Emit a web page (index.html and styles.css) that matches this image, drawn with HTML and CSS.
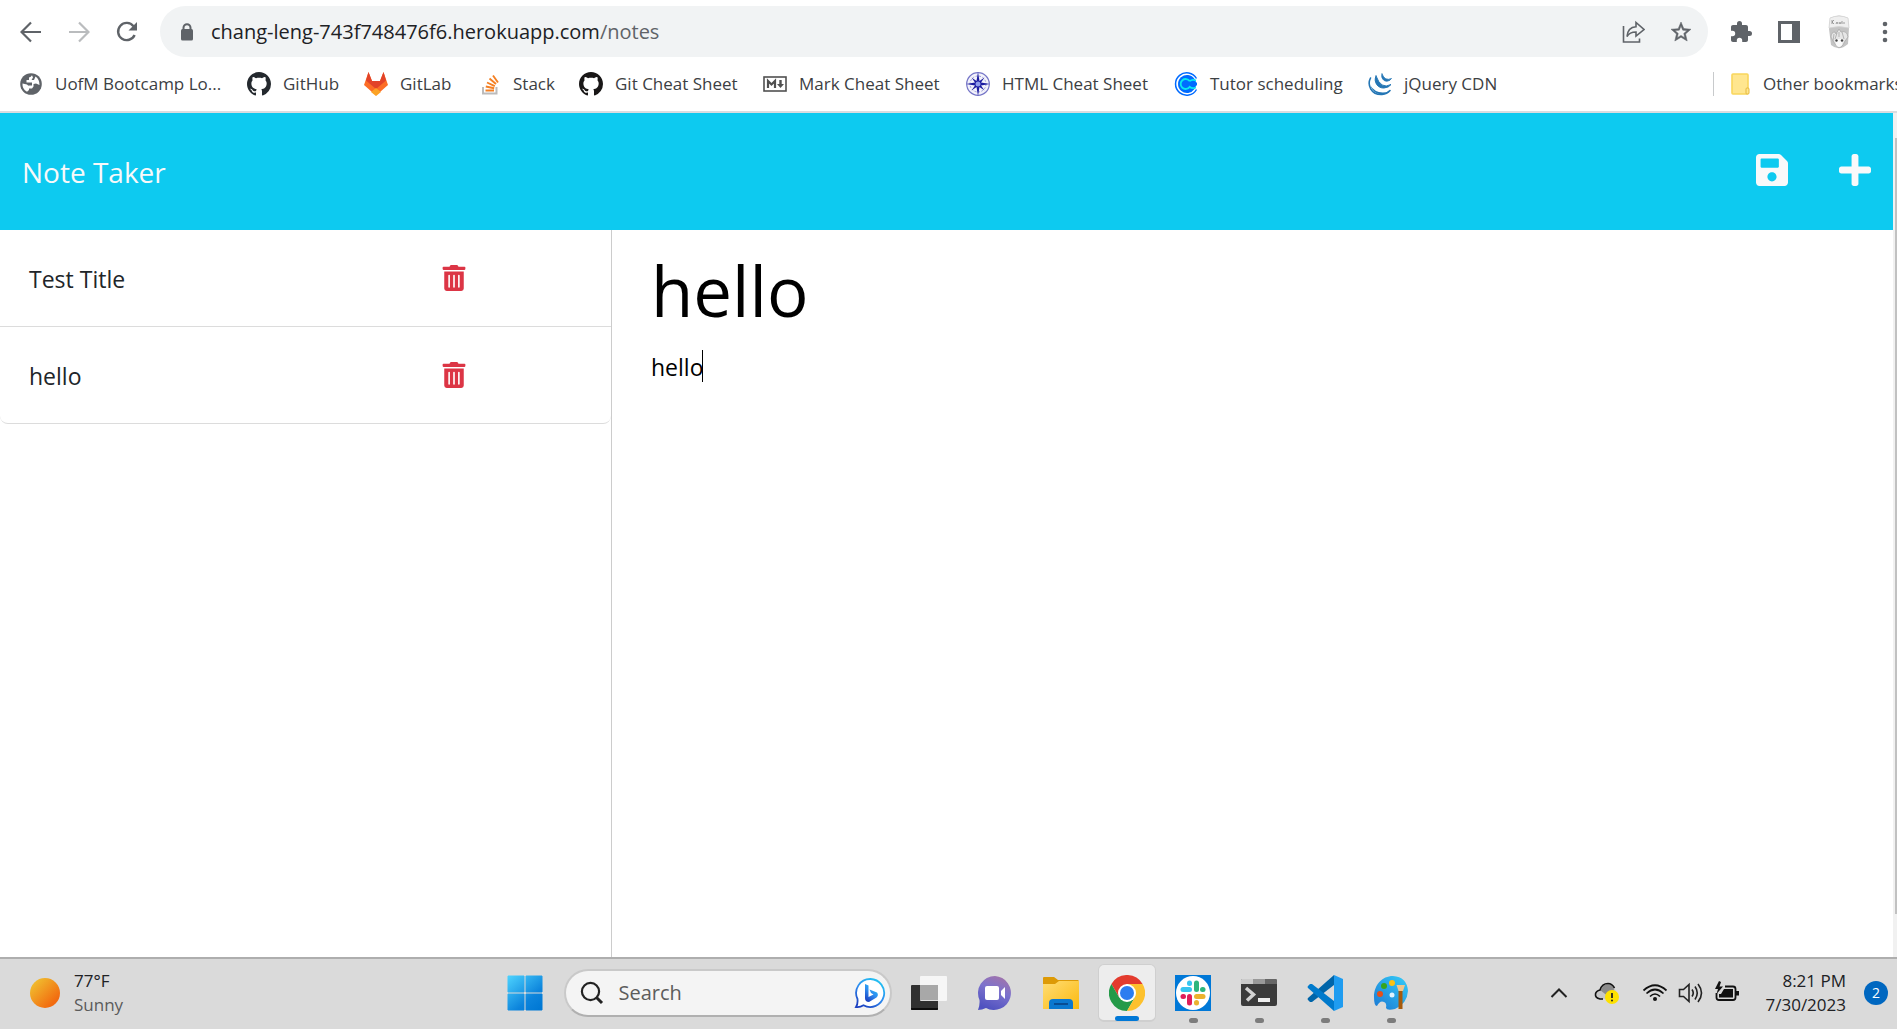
FILE: index.html
```html
<!DOCTYPE html>
<html lang="en">
<head>
<meta charset="utf-8">
<title>Note Taker</title>
<link rel="stylesheet" href="styles.css">
</head>
<body>
<div class="screen">
  <header class="browser">
    <div class="toolbar">
      <button class="tool" aria-label="Back"><svg width="22" height="22" viewBox="0 0 22 22"><path d="M21 11H2M11 1.500L1.500 11L11 20.500" fill="none" stroke="#5f6368" stroke-width="2.200"/></svg></button>
      <button class="tool" aria-label="Forward" disabled><svg width="22" height="22" viewBox="0 0 22 22"><path d="M1 11H20M11 1.500L20.500 11L11 20.500" fill="none" stroke="#babcbe" stroke-width="2.200"/></svg></button>
      <button class="tool" aria-label="Reload"><svg width="22" height="22" viewBox="0 0 22 22"><path d="M18.600 14A8.600 8.600 0 1 1 17.500 5.200" fill="none" stroke="#5f6368" stroke-width="2.400"/><path d="M21 1V9.500H12.500Z" fill="#5f6368"/></svg></button>
      <div class="address">
        <svg width="14" height="18" viewBox="0 0 14 18"><path d="M3.500 8V4.800a3.500 3.500 0 0 1 7 0V8" fill="none" stroke="#5f6368" stroke-width="2"/><rect x="1" y="6" width="12" height="11.500" rx="1.500" fill="#5f6368"/></svg>
        <div class="url" role="textbox" aria-label="Address" contenteditable="true" spellcheck="false">chang-leng-743f748476f6.herokuapp.com<span class="path">/notes</span></div>
        <button class="tool" aria-label="Share"><svg width="24" height="24" viewBox="0 0 24 24" fill="none" stroke="#5f6368" stroke-width="1.600"><path d="M2.500 6V22H18.500V18.500"/><path d="M6 16.500C6.500 10 10 7 15 6.700V2.500L23 9.500L15 16V12C11 12 8 13 6 16.500Z"/></svg></button>
        <button class="tool" aria-label="Bookmark"><svg width="24" height="24" viewBox="0 0 24 24"><path d="M22 9.240l-7.190-.620L12 2 9.190 8.630 2 9.240l5.460 4.730L5.820 21 12 17.270 18.180 21l-1.630-7.030L22 9.240zM12 15.400l-3.760 2.270 1-4.280-3.320-2.880 4.380-.380L12 6.100l1.710 4.040 4.380.380-3.320 2.880 1 4.280L12 15.400z" fill="#5f6368" stroke="#5f6368" stroke-width=".5"/></svg></button>
      </div>
      <button class="tool" aria-label="Extensions"><svg width="24" height="24" viewBox="0 0 24 24"><path d="M20.500 11H19V7c0-1.100-.9-2-2-2h-4V3.500a2.500 2.500 0 0 0-5 0V5H4c-1.100 0-2 .9-2 2v3.800h1.500a2.700 2.700 0 0 1 0 5.400H2V20c0 1.100.9 2 2 2h3.800v-1.500a2.700 2.700 0 0 1 5.400 0V22H17c1.100 0 2-.9 2-2v-4h1.500a2.500 2.500 0 0 0 0-5z" fill="#5f6368"/></svg></button>
      <button class="tool" aria-label="Side panel"><svg width="22" height="22" viewBox="0 0 22 22"><path d="M0 0H22V22H0ZM3 3V19H14V3Z" fill="#5f6368" fill-rule="evenodd"/></svg></button>
      <button class="tool tool-profile" aria-label="Profile"><svg width="24" height="34" viewBox="0 0 24 34">
        <path d="M3 3Q12-2 21 3L22 13L21 29Q12 37 4 30L2 14Z" fill="#c4c4c4"/>
        <path d="M3 3Q12-1 21 3L22 13Q12 10 2 13Z" fill="#efefef" stroke="#d4d4d4" stroke-width=".8"/>
        <path d="M5 5v4m0-2 2-2m-2 2 2 2m2 0 1-2 1 2m1-2 1 2 1-2m1 2v-3m2 3v-2" fill="none" stroke="#888" stroke-width=".8"/>
        <path d="M4 22Q4 17 8 17L9 19L12 14L14 17Q20 15 21 22L18 26L16 30Q12 35 9 30L6 26Z" fill="#e6e6e6" stroke="#aaa" stroke-width=".8"/>
        <path d="M7 19l-1 7m4-8-2 6m4-7v5m3-5 2 7" fill="none" stroke="#b4b4b4"/>
        <path d="M8 24H16L15 30Q12 34 9 30Z" fill="#fafafa"/>
        <circle cx="9.500" cy="25.500" r="1.200" fill="#444"/><circle cx="15" cy="25.500" r="1.200" fill="#444"/></svg></button>
      <button class="tool tool-menu" aria-label="Menu"><svg width="6" height="22" viewBox="0 0 6 22" fill="#5f6368"><circle cx="3" cy="3" r="2.300"/><circle cx="3" cy="11" r="2.300"/><circle cx="3" cy="19" r="2.300"/></svg></button>
    </div>
    <nav class="bookmarks" aria-label="Bookmarks">
      <a class="bookmark" href="#"><svg width="24" height="24" viewBox="0 0 24 24"><circle cx="12" cy="12" r="10.800" fill="#5f6368"/><path d="M13 3.300Q12 5 10 5.500V8H7.500V10.500H13V13.500H10.500Q9 14 8 12.500L3.500 11.500Q3 17 8 19.800L10 18V16.500H13L14.500 14.500V12L17 11.500L20.500 13Q20.500 7 16.500 4.500L15 8H12.500L14 5.500Z" fill="#fff"/></svg><span>UofM Bootcamp Lo...</span></a>
      <a class="bookmark" href="#"><svg width="24" height="24" viewBox="0 0 16 16"><path fill="#24292e" d="M8 0C3.580 0 0 3.580 0 8c0 3.540 2.290 6.530 5.470 7.590.4.070.55-.17.55-.38 0-.19-.01-.82-.01-1.490-2.010.37-2.530-.49-2.690-.94-.09-.23-.48-.94-.82-1.130-.28-.15-.68-.52-.01-.53.63-.01 1.080.58 1.230.82.72 1.210 1.870.87 2.330.66.07-.52.28-.87.51-1.070-1.780-.2-3.640-.89-3.640-3.950 0-.87.31-1.590.82-2.150-.08-.2-.36-1.020.08-2.120 0 0 .67-.21 2.200.82.64-.18 1.320-.27 2-.27s1.360.09 2 .27c1.530-1.040 2.200-.82 2.200-.82.44 1.100.16 1.920.08 2.120.51.56.82 1.270.82 2.150 0 3.070-1.870 3.750-3.650 3.950.29.25.54.73.54 1.480 0 1.070-.01 1.930-.01 2.200 0 .21.15.46.55.38A8.010 8.010 0 0 0 16 8c0-4.420-3.580-8-8-8z"/></svg><span>GitHub</span></a>
      <a class="bookmark" href="#"><svg width="24" height="24" viewBox="0 0 24 24"><path d="M4.500 0L8 9H16L19.500 0L24 13L12 23.500L0 13Z" fill="#fc6d26"/><path d="M4.500 0L8 9H16L19.500 0L22 8.500L12 17L2 8.500Z" fill="#e24329"/><path d="M12 16L17 20L12 24L7 20Z" fill="#fca326"/></svg><span>GitLab</span></a>
      <a class="bookmark" href="#"><svg width="20" height="24" viewBox="0 0 20 24" fill="none"><path d="M2 15V21.500H15.500V15" stroke="#bcbbbb" stroke-width="2"/><path d="M4.500 18.500H13M4.800 14.500L13.200 16.300M6 10.500L13.800 14.200M8.500 6.500L15 12M12 3.500L17 10.500" stroke="#f48024" stroke-width="1.900"/></svg><span>Stack</span></a>
      <a class="bookmark" href="#"><svg width="24" height="24" viewBox="0 0 16 16"><path fill="#191717" d="M8 0C3.580 0 0 3.580 0 8c0 3.540 2.290 6.530 5.470 7.590.4.070.55-.17.55-.38 0-.19-.01-.82-.01-1.490-2.010.37-2.530-.49-2.690-.94-.09-.23-.48-.94-.82-1.130-.28-.15-.68-.52-.01-.53.63-.01 1.080.58 1.230.82.72 1.210 1.870.87 2.330.66.07-.52.28-.87.51-1.070-1.780-.2-3.640-.89-3.640-3.950 0-.87.31-1.590.82-2.150-.08-.2-.36-1.020.08-2.120 0 0 .67-.21 2.200.82.64-.18 1.320-.27 2-.27s1.360.09 2 .27c1.530-1.040 2.200-.82 2.200-.82.44 1.100.16 1.920.08 2.120.51.56.82 1.270.82 2.150 0 3.070-1.870 3.750-3.650 3.950.29.25.54.73.54 1.480 0 1.070-.01 1.930-.01 2.200 0 .21.15.46.55.38A8.010 8.010 0 0 0 16 8c0-4.420-3.580-8-8-8z"/></svg><span>Git Cheat Sheet</span></a>
      <a class="bookmark" href="#"><svg width="24" height="24" viewBox="0 0 24 24" fill="none" stroke="#505050"><rect x="1" y="5" width="22" height="14" stroke-width="1.600"/><path d="M5 16V9L8.500 12.500L12 9V16" stroke-width="2.200"/><path d="M17.500 8V13" stroke-width="2.400"/><path d="M14 12H21L17.500 16Z" fill="#505050" stroke="none"/></svg><span>Mark Cheat Sheet</span></a>
      <a class="bookmark" href="#"><svg width="24" height="24" viewBox="0 0 24 24"><circle cx="12" cy="12" r="11.300" fill="#f3f3fb" stroke="#7777c8" stroke-width="1.200"/><circle cx="12" cy="12" r="8" fill="none" stroke="#9a9ad6" stroke-dasharray="2 1.500"/><path d="M12 0L13.500 9L18.500 5.500L15 10.500L24 12L15 13.500L18.500 18.500L13.500 15L12 24L10.500 15L5.500 18.500L9 13.500L0 12L9 10.500L5.500 5.500L10.500 9Z" fill="#1c1ca0"/><circle cx="12" cy="12" r="2.500" fill="#8f9bea"/></svg><span>HTML Cheat Sheet</span></a>
      <a class="bookmark" href="#"><svg width="24" height="24" viewBox="0 0 24 24" fill="none"><path d="M22.500 6.500A11.200 11.200 0 1 0 22.500 17.500" stroke="#006bff" stroke-width="1.500"/><path d="M20.500 7A9 9 0 1 0 20.500 17L22 14V10Z" fill="#006bff"/><path d="M15.800 9.200A5 5 0 1 0 15.800 14.800Q18 17 22 15.500" stroke="#0ae8f0" stroke-width="1.800"/><path d="M15.800 9.200Q18 7 22 8.500" stroke="#0ae8f0" stroke-width="1.800"/><path d="M18 12H23" stroke="#006bff" stroke-width="3"/></svg><span>Tutor scheduling</span></a>
      <a class="bookmark" href="#"><svg width="24" height="24" viewBox="0 0 24 24" fill="none" stroke="#2476b5" stroke-linecap="round"><path d="M2.500 6C-1 13 3 23 14 22.500Q19 22 22 18.500" stroke-width="1.600"/><path d="M2 13Q5 22 14 22.500Q18 22 21 19.500Q8 23 2 13Z" fill="#2476b5" stroke="none"/><path d="M8 4C5 10 10 16.500 16 16Q21 15.500 23 12.500Q13 18 8 4Z" fill="#2476b5" stroke-width="1"/><path d="M14 2C12.500 6 16 9.500 19 9.200Q22 9 23.500 6.500Q17 9.500 14 2Z" fill="#2476b5" stroke-width=".8"/></svg><span>jQuery CDN</span></a>
      <a class="bookmark bookmark-folder" href="#"><svg width="20" height="24" viewBox="0 0 20 24"><rect x="2" y="2" width="16" height="20" rx="1" fill="#ffe68f" stroke="#f9d65c" stroke-width="1.600"/><rect x="16" y="16" width="3" height="6" rx="1" fill="#ffe68f" stroke="#e6b93c"/></svg><span>Other bookmarks</span></a>
    </nav>
  </header>

  <div class="viewport">
    <div class="page">
      <header class="app-bar">
        <a class="brand" href="#">Note Taker</a>
        <div class="app-actions">
          <button class="plain" aria-label="Save note"><svg width="32" height="32" viewBox="0 32 448 448"><path fill="#f8f9fa" fill-rule="evenodd" d="M433.941 129.941l-83.882-83.882A48 48 0 0 0 316.118 32H48C21.490 32 0 53.490 0 80v352c0 26.510 21.490 48 48 48h352c26.510 0 48-21.490 48-48V163.882a48 48 0 0 0-14.059-33.941zM224 416c-35.346 0-64-28.654-64-64 0-35.346 28.654-64 64-64s64 28.654 64 64c0 35.346-28.654 64-64 64zm96-304.520V212c0 6.627-5.373 12-12 12H76c-6.627 0-12-5.373-12-12V108c0-6.627 5.373-12 12-12h228.520c3.183 0 6.235 1.264 8.485 3.515l3.480 3.480A11.996 11.996 0 0 1 320 111.480z"/></svg></button>
          <button class="plain" aria-label="New note"><svg width="32" height="32" viewBox="0 32 448 448"><path fill="#f8f9fa" d="M416 208H272V64c0-17.670-14.330-32-32-32h-32c-17.670 0-32 14.330-32 32v144H32c-17.670 0-32 14.330-32 32v32c0 17.670 14.330 32 32 32h144v144c0 17.670 14.330 32 32 32h32c17.670 0 32-14.330 32-32V304h144c17.670 0 32-14.330 32-32v-32c0-17.670-14.330-32-32-32z"/></svg></button>
        </div>
      </header>
      <main class="workspace">
        <aside class="sidebar">
          <ul class="notes">
            <li class="note"><span class="note-title">Test Title</span><button class="plain" aria-label="Delete Test Title"><svg width="24" height="26" viewBox="0 0 448 512"><path fill="#dc3545" fill-rule="evenodd" d="M32 464a48 48 0 0 0 48 48h288a48 48 0 0 0 48-48V128H32zm272-256a16 16 0 0 1 32 0v224a16 16 0 0 1-32 0zm-96 0a16 16 0 0 1 32 0v224a16 16 0 0 1-32 0zm-96 0a16 16 0 0 1 32 0v224a16 16 0 0 1-32 0zM432 32H312l-9.400-18.700A24 24 0 0 0 281.100 0H166.800a23.720 23.720 0 0 0-21.400 13.300L136 32H16A16 16 0 0 0 0 48v32a16 16 0 0 0 16 16h416a16 16 0 0 0 16-16V48a16 16 0 0 0-16-16z"/></svg></button></li>
            <li class="note"><span class="note-title">hello</span><button class="plain" aria-label="Delete hello"><svg width="24" height="26" viewBox="0 0 448 512"><path fill="#dc3545" fill-rule="evenodd" d="M32 464a48 48 0 0 0 48 48h288a48 48 0 0 0 48-48V128H32zm272-256a16 16 0 0 1 32 0v224a16 16 0 0 1-32 0zm-96 0a16 16 0 0 1 32 0v224a16 16 0 0 1-32 0zm-96 0a16 16 0 0 1 32 0v224a16 16 0 0 1-32 0zM432 32H312l-9.400-18.700A24 24 0 0 0 281.100 0H166.800a23.720 23.720 0 0 0-21.400 13.300L136 32H16A16 16 0 0 0 0 48v32a16 16 0 0 0 16 16h416a16 16 0 0 0 16-16V48a16 16 0 0 0-16-16z"/></svg></button></li>
          </ul>
        </aside>
        <section class="editor">
          <input class="editor-title" type="text" value="hello" aria-label="Note title">
          <div class="editor-body">
            <textarea class="editor-text" aria-label="Note text" spellcheck="false">hello</textarea>
            <span class="caret"></span>
          </div>
        </section>
      </main>
    </div>
    <div class="scrollbar"><div class="thumb"></div></div>
  </div>

  <footer class="taskbar">
    <div class="weather">
      <svg width="30" height="30" viewBox="0 0 30 30"><defs><linearGradient id="sun" x1=".1" y1=".1" x2=".8" y2=".8"><stop offset="0" stop-color="#f0c030"/><stop offset="1" stop-color="#f26b0f"/></linearGradient></defs><circle cx="15" cy="15" r="15" fill="url(#sun)"/></svg>
      <div class="weather-text"><span>77°F</span><span class="muted">Sunny</span></div>
    </div>
    <div class="apps">
      <button class="app" aria-label="Start"><svg width="36" height="36" viewBox="0 0 36 36"><defs><linearGradient id="win" gradientUnits="userSpaceOnUse" x1="0" y1="0" x2="30" y2="36"><stop offset="0" stop-color="#4fd5ff"/><stop offset=".7" stop-color="#0c84dc"/><stop offset="1" stop-color="#0078d4"/></linearGradient></defs><path d="M1 1H17V17H1ZM19 1H35V17H19ZM1 19H17V35H1ZM19 19H35V35H19Z" fill="url(#win)" stroke="url(#win)"/></svg></button>
      <label class="search">
        <svg width="24" height="24" viewBox="0 0 24 24" fill="none" stroke="#222"><circle cx="10.500" cy="10.500" r="8.600" stroke-width="2.200"/><path d="M16.500 16.500L22 22" stroke-width="3"/></svg>
        <input class="search-input" type="text" placeholder="Search" aria-label="Search">
        <svg width="32" height="32" viewBox="0 0 32 32"><defs><linearGradient id="bing" x1=".8" y1="0" x2=".2" y2="1"><stop offset="0" stop-color="#22c6f2"/><stop offset=".5" stop-color="#2f8df0"/><stop offset="1" stop-color="#1b3fc0"/></linearGradient></defs><path d="M16.500 2A14 14 0 1 1 9.500 28.300Q6 30.500 2 30Q4 27 3.500 22A14 14 0 0 1 16.500 2Z" fill="#fff" stroke="url(#bing)" stroke-width="1.800"/><path d="M11 7L14.500 8.500V20L19.500 17.500L17 16L15.500 12.500L23 15.500Q25 18 22.500 20.500L15 25Q11 25 11 21Z" fill="url(#bing)"/></svg>
      </label>
      <button class="app" aria-label="Task view"><svg width="36" height="36" viewBox="0 0 36 36"><rect x="0" y="10" width="27" height="25" rx="1" fill="#303030"/><path d="M0 33H27V34Q27 35 26 35H1Q0 35 0 34Z" fill="#0c0c0c"/><rect x="9" y="1" width="27" height="25" rx="1" fill="#fafafa" opacity=".85"/><rect x="9" y="10" width="18" height="15" fill="#a8a8a8"/></svg></button>
      <button class="app" aria-label="Chat"><svg width="36" height="36" viewBox="0 0 36 36"><defs><linearGradient id="chat" x1=".8" y1="0" x2=".4" y2="1"><stop offset="0" stop-color="#a473a8"/><stop offset=".45" stop-color="#7c72cd"/><stop offset="1" stop-color="#5052c0"/></linearGradient></defs><path d="M18 1A17 17 0 1 1 9 33Q5 35 1 35Q3 30 2.500 25A17 17 0 0 1 18 1Z" fill="url(#chat)"/><rect x="8" y="11" width="14" height="14" rx="2" fill="#fff"/><path d="M24 16L28 12V24L24 20Z" fill="#fff"/></svg></button>
      <button class="app" aria-label="File Explorer"><svg width="36" height="36" viewBox="0 0 36 36"><defs><linearGradient id="folder" x1="0" y1="0" x2="1" y2="1"><stop offset="0" stop-color="#ffdd75"/><stop offset="1" stop-color="#fbb90f"/></linearGradient></defs><path d="M0 3Q0 2 1 2H11L15 5H35L36 6V10H0Z" fill="#dd9a06"/><path d="M0 9H12L16 6H36V34H0Z" fill="url(#folder)"/><path d="M6 34V28Q6 24 10 24H26Q30 24 30 28V34Z" fill="#0b78cf"/><path d="M11 29H25" stroke="#084d93" stroke-width="2"/></svg></button>
      <button class="app app-active" aria-label="Chrome"><svg width="36" height="36" viewBox="0 0 36 36"><path d="M2.400 9A18 18 0 0 1 33.600 9H18L10.200 22.500Z" fill="#e33b2e"/><path d="M2.400 9A18 18 0 0 0 18 36L25.800 22.500H10.200Z" fill="#249a48"/><path d="M33.600 9A18 18 0 0 1 18 36L25.800 22.500Q28 14 18 9Z" fill="#fdc12d"/><circle cx="18" cy="18" r="9" fill="#fff"/><circle cx="18" cy="18" r="7" fill="#2c7df0"/></svg><span class="running running-active"></span></button>
      <button class="app" aria-label="Slack"><svg width="36" height="36" viewBox="0 0 36 36"><path d="M0 0H36V36H0Z" fill="#0078d7"/><circle cx="18" cy="18" r="17" fill="#fff"/><g stroke-width="5" stroke-linecap="round"><path d="M8 14.500H14.500" stroke="#36c5f0"/><path d="M14.500 8V8.500" stroke="#36c5f0"/><path d="M21.500 8V14.500" stroke="#2eb67d"/><path d="M27.500 14.500H28" stroke="#2eb67d"/><path d="M21.500 21.500H28" stroke="#ecb22e"/><path d="M21.500 27.500V28" stroke="#ecb22e"/><path d="M14.500 21.500V28" stroke="#e01e5a"/><path d="M8 21.500H8.500" stroke="#e01e5a"/></g></svg><span class="running"></span></button>
      <button class="app" aria-label="Terminal"><svg width="36" height="36" viewBox="0 0 36 36"><rect x="0" y="4" width="36" height="27" rx="2" fill="#3b3b3b"/><path d="M1 4H12V9H0V5Z" fill="#ccc"/><path d="M12 4H24V9H12Z" fill="#999"/><path d="M24 4H35L36 5V9H24Z" fill="#666"/><path d="M5 13L12.500 19.500L6 25.500" fill="none" stroke="#d2d2d2" stroke-width="3.500"/><rect x="17" y="23" width="12" height="4" fill="#eee"/></svg><span class="running"></span></button>
      <button class="app" aria-label="Visual Studio Code"><svg width="36" height="36" viewBox="0 0 36 36"><path d="M27 0L1 23Q0 24 1 25L3 27H5L27 10Z" fill="#0065a9"/><path d="M27 36L1 13Q0 12 1 11L3 9H5L27 26Z" fill="#007acc"/><path d="M27 0L36 4V32L27 36Z" fill="#1f9cf0"/></svg><span class="running"></span></button>
      <button class="app" aria-label="Paint"><svg width="36" height="36" viewBox="0 0 36 36"><defs><linearGradient id="paint" x1="1" y1="0" x2=".1" y2="1"><stop offset="0" stop-color="#35cdf8"/><stop offset="1" stop-color="#1c7cd5"/></linearGradient></defs><path d="M20 1C9 1 1 10 1 22Q1 31 4 31Q7 25 11 27Q14 28 13 33Q14 36 22 34Q34 29 35 16Q34 2 20 1Z" fill="url(#paint)"/><circle cx="19" cy="20" r="2.500" fill="#dff3ff"/><circle cx="7" cy="19" r="3" fill="#e5501a"/><circle cx="11" cy="11" r="3" fill="#37a51c"/><circle cx="19" cy="8" r="3" fill="#fbc212"/><path d="M25.500 16H29.500V34H25.500Z" fill="#a65a0c"/><path d="M23.500 10H32L30 16H25.500Z" fill="#f0c68d"/></svg><span class="running"></span></button>
    </div>
    <div class="tray">
      <button class="tray-item" aria-label="Hidden icons"><svg width="18" height="24" viewBox="0 0 18 24"><path d="M1.500 16L9 8.500L16.500 16" fill="none" stroke="#222" stroke-width="2"/></svg></button>
      <button class="tray-item tray-cloud" aria-label="OneDrive"><svg width="26" height="24" viewBox="0 0 26 24"><path d="M6 18Q2 18 2 14Q2 10 6 9Q8 3 14 3Q19 3 21 8L23 14L13 18Z" fill="#c8c8c8"/><path d="M6 9Q14 6 21 11V16H15Z" fill="#8b8b8b"/><path d="M7 9Q9 3 14 3Q19 3 20 9L15 13Z" fill="#8b8b8b"/><path d="M9 18H6Q1 17 1.500 13Q2 10 6 9Q8 2.500 14 2.500Q18 2.500 20.500 7" fill="none" stroke="#111" stroke-width="1.600"/><circle cx="18" cy="16" r="7" fill="#fde100"/><path d="M18 12V17" stroke="#222" stroke-width="1.800"/><circle cx="18" cy="19.500" r="1" fill="#222"/></svg></button>
      <button class="tray-item" aria-label="Network"><svg width="26" height="24" viewBox="0 0 26 24" fill="none" stroke="#111" stroke-width="1.700"><path d="M1.500 9.500Q13-1 24.500 9.500M4.500 12.500Q13 4.500 21.500 12.500M8 15.500Q13 10.500 18 15.500"/><circle cx="13" cy="18" r="2" fill="#111" stroke="none"/></svg></button>
      <button class="tray-item" aria-label="Volume"><svg width="26" height="24" viewBox="0 0 26 24" fill="none" stroke="#222" stroke-width="1.600"><path d="M1.500 8.500H5.500L11 3.500V20.500L5.500 15.500H1.500Z"/><path d="M14 8.500Q16.500 12 14 15.500M17 5.500Q21.500 12 17 18.500M20 3Q27 12 20 21"/></svg></button>
      <button class="tray-item" aria-label="Battery"><svg width="26" height="24" viewBox="0 0 26 24"><path d="M11 5.500H19Q21.500 5.500 21.500 8V16.500Q21.500 19 19 19H5Q2.500 19 2.500 16.500V12" fill="none" stroke="#111" stroke-width="1.800"/><path d="M10 8H19V16.500H5V13H7ZM22 10H25V14.500H22Z" fill="#111"/><path d="M5 0L1 8H4L2.500 13L9 5.500H5.500L7 1Z" fill="#111"/></svg></button>
      <div class="clock"><span>8:21 PM</span><span>7/30/2023</span></div>
      <span class="badge">2</span>
    </div>
  </footer>
</div>
</body>
</html>
```
FILE: styles.css
```css
* { box-sizing: border-box; }

body {
  margin: 0;
  background: #fff;
  font-family: "Open Sans", "Noto Sans", sans-serif;
  color: #202124;
}

button, input, textarea {
  font: inherit;
  color: inherit;
  border: 0;
  background: none;
  padding: 0;
  outline: 0;
}

svg { display: block; flex: none; }
a { color: inherit; text-decoration: none; }

.screen {
  display: flex;
  flex-direction: column;
  min-height: 100vh;
  overflow: hidden;
}

/* Browser chrome */
.browser { border-bottom: 2px solid #dadce0; }

.toolbar {
  display: flex;
  align-items: center;
  padding: 6px 0 0 7px;
}

.tool {
  display: grid;
  place-items: center;
  flex: none;
  width: 48px;
  height: 48px;
}

.tool-profile { padding-left: 4px; }

.tool-menu {
  width: 36px;
  padding-left: 12px;
}

.address {
  display: flex;
  align-items: center;
  flex: 1;
  min-width: 0;
  height: 51px;
  margin: 0 9px;
  padding: 0 3px 0 20px;
  border-radius: 26px;
  background: #f1f3f4;
}

.url {
  flex: 1;
  min-width: 0;
  margin-left: 17px;
  font-size: 20px;
  line-height: 28px;
  white-space: nowrap;
}

.path { color: #5f6368; }

.bookmarks {
  display: grid;
  grid-template-columns: 227px 117px 117px 98px 184px 203px 208px 194px 1fr auto;
  align-items: center;
  height: 54px;
  padding-left: 20px;
  color: #3c4043;
  font-size: 17px;
  line-height: 24px;
  white-space: nowrap;
}

.bookmark {
  display: flex;
  align-items: center;
  gap: 12px;
}

.bookmark:first-child { margin-left: -1px; }

.bookmark-folder {
  gap: 13px;
  width: 184px;
  padding-left: 16px;
  border-left: 1px solid #c8cacc;
}

/* Notes page */
.viewport {
  display: flex;
  flex: 1;
}

.page {
  display: flex;
  flex-direction: column;
  flex: 1;
  min-width: 0;
}

.app-bar {
  display: flex;
  align-items: center;
  justify-content: space-between;
  height: 117px;
  padding: 0 22px;
  background: #0dcaf0;
  color: #f8f9fa;
}

.brand {
  font-size: 28px;
  line-height: 44px;
}

.app-actions {
  display: flex;
  gap: 51px;
  padding-bottom: 4px;
}

.workspace {
  display: grid;
  grid-template-columns: 612fr 1281fr;
  flex: 1;
}

.sidebar { border-right: 1px solid #ccc; }

.notes {
  margin: 0;
  padding: 0;
  list-style: none;
  border-bottom: 1px solid #dcdcdc;
  border-radius: 0 0 8px 8px;
}

.note {
  display: grid;
  grid-template-columns: 71% auto;
  justify-content: start;
  align-items: center;
  height: 96px;
  padding-left: 29px;
  color: #212529;
  font-size: 23px;
  line-height: 36px;
}

.note + .note {
  height: 97px;
  border-top: 1px solid #dcdcdc;
}

.note-title { padding-top: 2px; }

.editor {
  display: flex;
  flex-direction: column;
  padding: 16px 38px 0 39px;
  color: #000;
}

.editor-title {
  width: 100%;
  height: 88px;
  font-size: 69px;
}

.editor-body {
  display: flex;
  position: relative;
  flex: 1;
  margin-top: 15px;
}

.editor-text {
  flex: 1;
  resize: none;
  font-size: 23px;
  line-height: 36px;
}

.caret {
  position: absolute;
  top: 1px;
  left: 51px;
  width: 1px;
  height: 32px;
  background: #000;
}

.scrollbar {
  flex: none;
  width: 4px;
  padding: 25px 0 43px 2px;
  background: #f1f1f1;
}

.thumb {
  height: 100%;
  background: #c1c1c1;
}

/* Taskbar */
.taskbar {
  display: grid;
  grid-template-columns: 1fr auto 1fr;
  align-items: center;
  height: 72px;
  padding-bottom: 2px;
  border-top: 2px solid #aeaeae;
  background: #dadada;
  font-size: 17px;
  line-height: 24px;
}

.weather {
  display: flex;
  align-items: center;
  gap: 14px;
  padding-left: 30px;
}

.weather-text {
  display: flex;
  flex-direction: column;
}

.muted { color: #5a5a5a; }

.apps {
  display: flex;
  align-items: center;
  padding-left: 18px;
}

.app {
  display: grid;
  place-items: center;
  position: relative;
  width: 66px;
  height: 58px;
}

.app-active {
  width: 58px;
  margin: 0 4px;
  border: 1px solid #cfcfcf;
  border-bottom-width: 2px;
  border-radius: 6px;
  background: #ededed;
}

.running {
  position: absolute;
  bottom: -1px;
  left: 50%;
  width: 9px;
  height: 5px;
  margin-left: -4px;
  border-radius: 3px;
  background: #7c7c7c;
}

.running-active {
  width: 24px;
  margin-left: -12px;
  background: #0078d7;
}

.search {
  display: flex;
  align-items: center;
  width: 328px;
  height: 48px;
  margin: 0 4px 0 6px;
  padding: 0 4px 0 14px;
  border: 2px solid #c9c9c9;
  border-bottom-color: #b0b0b0;
  border-radius: 24px;
  background: #f4f4f4;
}

.search-input {
  flex: 1;
  min-width: 0;
  margin-left: 15px;
  font-size: 20px;
}

.search-input::placeholder { color: #5c5c5c; }

.tray {
  display: flex;
  align-items: center;
  justify-content: flex-end;
  padding-right: 9px;
}

.tray-item {
  display: grid;
  place-items: center;
  width: 36px;
  height: 48px;
}

.tray-cloud {
  width: 48px;
  margin: 0 6px;
}

.clock {
  display: flex;
  flex-direction: column;
  align-items: flex-end;
  width: 101px;
}

.badge {
  width: 24px;
  height: 24px;
  margin-left: 18px;
  border-radius: 50%;
  background: #0067c0;
  color: #fff;
  font-size: 14px;
  text-align: center;
}
```
